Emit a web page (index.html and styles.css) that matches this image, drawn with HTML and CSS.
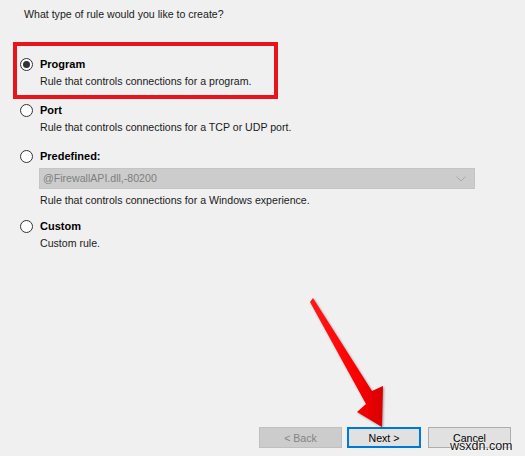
FILE: index.html
```html
<!DOCTYPE html>
<html lang="en">
<head>
<meta charset="utf-8">
<title>New Inbound Rule Wizard</title>
<link rel="stylesheet" href="styles.css">
</head>
<body>
<div class="window">
  <p class="question">What type of rule would you like to create?</p>

  <div class="option option-program highlighted">
    <span class="radio checked"></span>
    <div class="option-body">
      <div class="title">Program</div>
      <div class="desc">Rule that controls connections for a program.</div>
    </div>
  </div>

  <div class="option option-port">
    <span class="radio"></span>
    <div class="option-body">
      <div class="title">Port</div>
      <div class="desc">Rule that controls connections for a TCP or UDP port.</div>
    </div>
  </div>

  <div class="option option-predefined">
    <span class="radio"></span>
    <div class="option-body">
      <div class="title">Predefined:</div>
      <div class="select">
        <span class="select-text">@FirewallAPI.dll,-80200</span>
        <svg class="chevron" width="10" height="6" viewBox="0 0 10 6"><path d="M0.5 0.5 L5 5 L9.5 0.5" fill="none" stroke="#a8a8a8" stroke-width="1"/></svg>
      </div>
      <div class="desc">Rule that controls connections for a Windows experience.</div>
    </div>
  </div>

  <div class="option option-custom">
    <span class="radio"></span>
    <div class="option-body">
      <div class="title">Custom</div>
      <div class="desc">Custom rule.</div>
    </div>
  </div>

  <div class="buttons">
    <button class="btn btn-back" disabled>&lt; Back</button>
    <button class="btn btn-next">Next &gt;</button>
    <button class="btn btn-cancel">Cancel</button>
  </div>

  <svg class="arrow" width="525" height="456" viewBox="0 0 525 456">
    <defs>
      <linearGradient id="ag" x1="0" y1="0" x2="1" y2="0">
        <stop offset="0" stop-color="#ff1a1a"/>
        <stop offset="0.6" stop-color="#ff0000"/>
        <stop offset="1" stop-color="#d80000"/>
      </linearGradient>
    </defs>
    <polygon points="310,302 313,298 372,391 383,386 382,427 357,412 366,404" fill="url(#ag)"/>
  </svg>

  <span class="watermark">wsxdn.com</span>
</div>
</body>
</html>
```

FILE: styles.css
```css
html, body {
  margin: 0;
  padding: 0;
  background: #f0f0f0;
}

.window {
  position: relative;
  width: 525px;
  height: 456px;
  display: flex;
  flex-direction: column;
  font-family: "Liberation Sans", Arial, sans-serif;
  font-size: 10.6px;
  color: #1a1a1a;
  background: #f0f0f0;
  overflow: hidden;
}

.question {
  margin: 7px 0 0 24px;
  line-height: 15px;
}

.option {
  display: grid;
  grid-template-columns: 13px 1fr;
  column-gap: 7px;
  padding-left: 20px;
  line-height: 17px;
}

.option.highlighted {
  margin: 20px 0 0 13px;
  width: 265px;
  box-sizing: border-box;
  border: 4px solid #e8141b;
  padding: 10px 0 5px 3px;
}

.option-port { margin-top: 3px; }
.option-predefined { margin-top: 12px; }
.option-custom { margin-top: 9px; }

.radio {
  width: 13px;
  height: 13px;
  margin-top: 2px;
  box-sizing: border-box;
  border: 1px solid #333333;
  border-radius: 50%;
  background: #ffffff;
  display: flex;
  align-items: center;
  justify-content: center;
}

.radio.checked::after {
  content: "";
  width: 7px;
  height: 7px;
  border-radius: 50%;
  background: #333333;
}

.title {
  font-weight: bold;
  font-size: 11px;
  color: #000000;
}

.desc {
  color: #1a1a1a;
}

.select {
  margin: 3px 0 3px -1px;
  width: 436px;
  height: 21px;
  box-sizing: border-box;
  border: 1px solid #c4c4c4;
  background: #cccccc;
  display: flex;
  align-items: center;
  justify-content: space-between;
  padding: 0 8px 0 3px;
}

.select-text {
  color: #7f7f7f;
  line-height: 19px;
}

.buttons {
  margin-top: auto;
  display: flex;
  justify-content: flex-end;
  padding: 0 14px 8px 0;
}

.btn {
  height: 21px;
  box-sizing: border-box;
  font-family: "Liberation Sans", Arial, sans-serif;
  font-size: 10.6px;
  padding: 0;
  border: 1px solid #adadad;
  background: #e1e1e1;
  color: #000000;
}

.btn-back {
  width: 83px;
  background: #cccccc;
  border-color: #bfbfbf;
  color: #838383;
}

.btn-next {
  width: 74px;
  margin: 0 7px 0 5px;
  border: 2px solid #0078d7;
}

.btn-cancel {
  width: 83px;
}

.arrow {
  position: absolute;
  left: 0;
  top: 0;
  filter: drop-shadow(1px 1px 1px rgba(0, 0, 0, 0.35));
  pointer-events: none;
}

.watermark {
  position: absolute;
  left: 450px;
  top: 439px;
  font-family: "Liberation Sans", Arial, sans-serif;
  font-size: 12.5px;
  line-height: 15px;
  color: #111111;
  text-shadow: 0 0 2px #ffffff, 0 0 2px #ffffff;
}
```
